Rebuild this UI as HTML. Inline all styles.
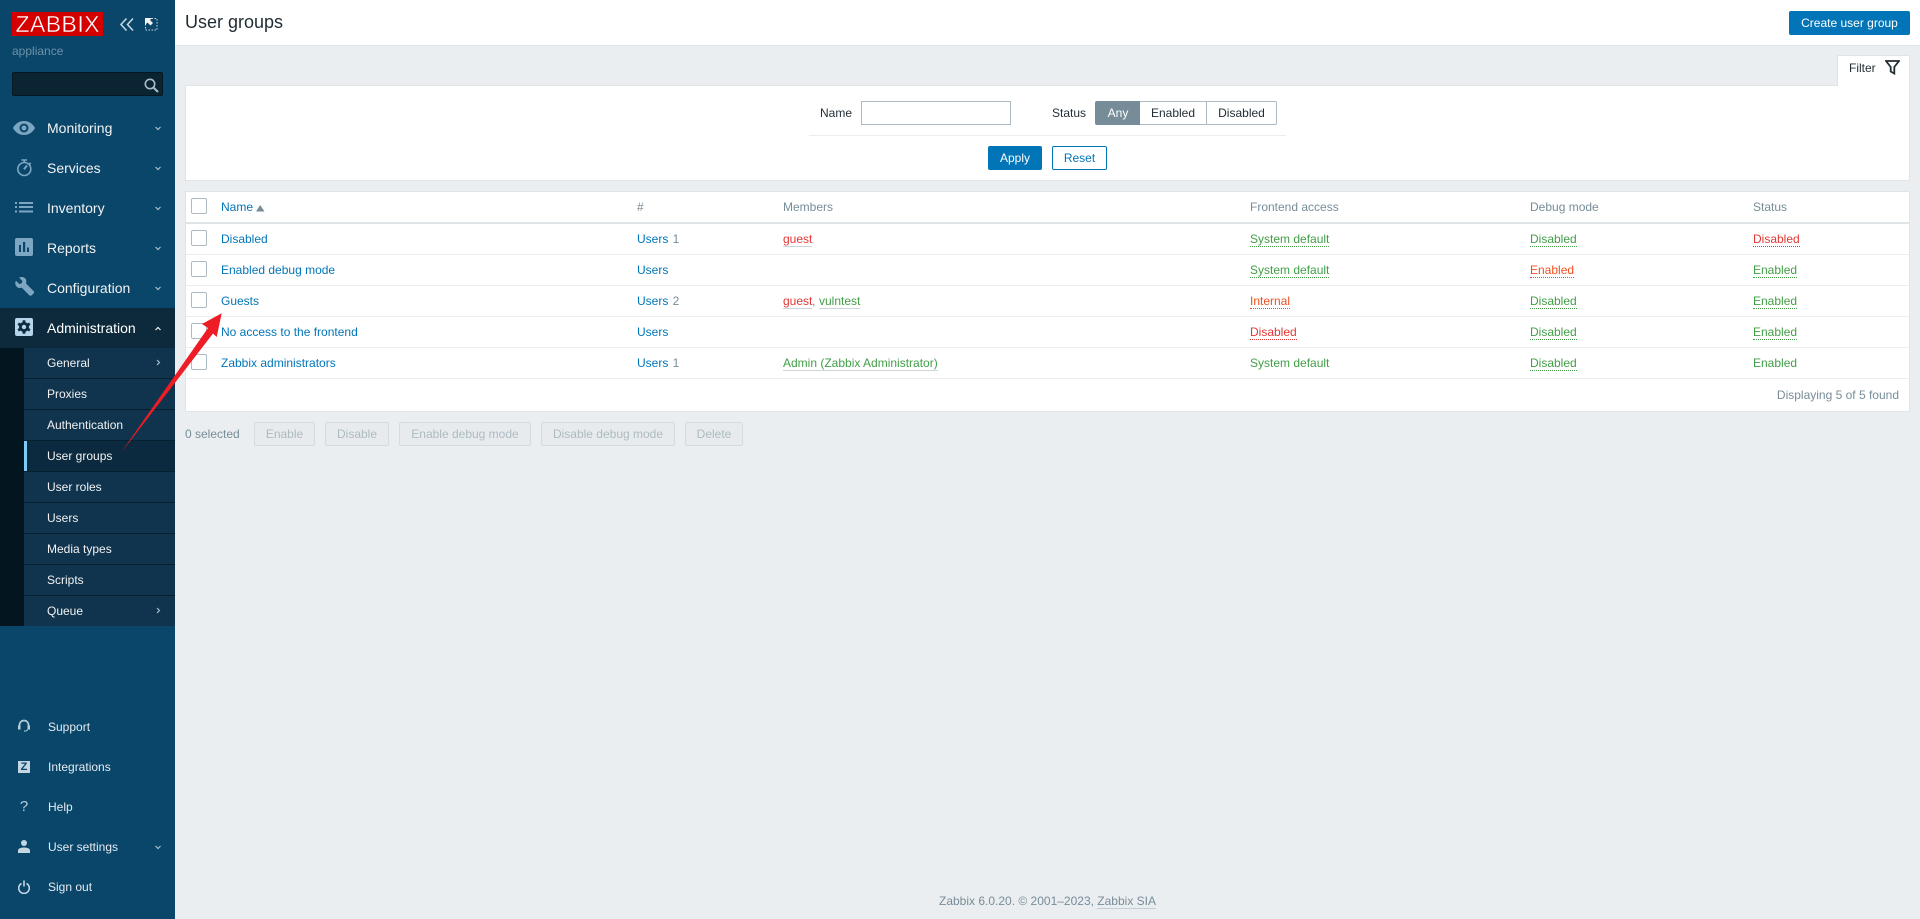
<!DOCTYPE html>
<html lang="en"><head><meta charset="utf-8"><title>User groups</title>
<style>
*{box-sizing:border-box}
html,body{margin:0;padding:0;width:1920px;height:919px;overflow:hidden;background:#ebeef0;font:12px/14px "Liberation Sans",Arial,sans-serif;color:#1f2c33}
.a{position:absolute}
.t{position:absolute;white-space:nowrap;line-height:14px}
#side{position:absolute;left:0;top:0;width:175px;height:919px;background:#0a466a}
.m{position:absolute;left:47px;font-size:14px;line-height:16px;color:#f2f2f2;white-space:nowrap}
.s{position:absolute;left:47px;font-size:12px;line-height:14px;color:#f2f2f2;white-space:nowrap}
.b{position:absolute;left:48px;font-size:12px;line-height:14px;color:#e4ebf0;white-space:nowrap}
.sub{position:absolute;left:24px;width:151px;height:31px;background:#10344d;border-bottom:1px solid #06202f}
.l{color:#0275b8}.g{color:#429e47}.r{color:#e33734}.o{color:#f24f1d}.h{color:#768d99}
.u{border-bottom:1px solid #cdd5db}.d{border-bottom:1px dotted currentColor}
.cb{position:absolute;left:191px;width:16px;height:16px;background:#fff;border:1px solid #acbbc2;border-radius:2px}
.ln{position:absolute;left:186px;width:1723px;height:1px;background:#ebeef0}
.dis{position:absolute;top:422px;height:24px;border:1px solid #d5dce0;border-radius:2px;background:#e8ebed;color:#acbbc2;text-align:center;line-height:22px}
.seg{position:absolute;top:101px;height:24px;border:1px solid #acbbc2;background:#fff;text-align:center;line-height:22px;color:#1f2c33}
svg{display:block}
</style></head><body>

<div id="side">
  <svg class="a" style="left:12px;top:12px" width="91" height="24"><rect width="91" height="24" fill="#d40000"/><text x="3.500" y="20" font-family="Liberation Sans" font-size="23" fill="#fff" stroke="#d40000" stroke-width=".4" textLength="84" lengthAdjust="spacing">ZABBIX</text></svg>
  <svg class="a" style="left:118px;top:16px" width="42" height="16" fill="none" stroke="#c9d8e2" stroke-width="1.500"><path d="M8.500 2.500 3 8.500l5.500 6M15 2.500 9.500 8.500l5.500 6"/><path d="M27.500 2.500h11.500v11.500H27.500z" stroke-dasharray="1.500 1.500" stroke-width="1"/><path d="M27 2h7l-2 2 3 3-2.500 2.500-3-3L27 9z" fill="#f2f2f2" stroke="none"/></svg>
  <div class="t" style="left:12px;top:44px;color:#6d91a8">appliance</div>
  <div class="a" style="left:12px;top:72px;width:151px;height:24px;background:#0b2433;border:1px solid #051722;border-radius:2px"></div>
  <svg class="a" style="left:144px;top:78px" width="15" height="15" fill="none" stroke="#a8bdca" stroke-width="1.600"><circle cx="6" cy="6" r="4.700"/><path d="m9.500 9.500 4.500 4.500" stroke-width="2"/></svg>

  <svg class="a" style="left:13px;top:121px" width="22" height="14"><path fill="#7ca6c2" fill-rule="evenodd" d="M11 0c5 0 9 3 11 7-2 4-6 7-11 7S2 11 0 7c2-4 6-7 11-7Zm0 2.500a4.500 4.500 0 1 0 0 9 4.500 4.500 0 0 0 0-9Zm0 2a2.500 2.500 0 1 1 0 5 2.500 2.500 0 0 1 0-5Z"/></svg>
  <div class="m" style="top:120px">Monitoring</div>
  <svg class="a" style="left:16px;top:159px" width="17" height="18" fill="none" stroke="#7ca6c2" stroke-width="1.600"><circle cx="8.300" cy="10" r="6.500"/><path d="M5.500 1h5.600M8.300 1v2.500M13.300 3.800l1.500 1.500"/><path d="m8 10.300 3-3.800" stroke-width="2"/></svg>
  <div class="m" style="top:160px">Services</div>
  <svg class="a" style="left:15px;top:201px" width="19" height="12" fill="#7ca6c2"><path d="M0 1h2v2H0zM4 1h14v2H4zM0 5h2v2H0zM4 5h14v2H4zM0 9.500h2v2H0zM4 9.500h14v2H4z"/></svg>
  <div class="m" style="top:200px">Inventory</div>
  <svg class="a" style="left:15px;top:238px" width="18" height="18"><rect width="18" height="18" rx="2" fill="#7ca6c2"/><path fill="#0a466a" d="M4 7h2v7H4zM8 4h2.200v10H8zM12 9.500h2V14h-2z"/></svg>
  <div class="m" style="top:240px">Reports</div>
  <svg class="a" style="left:15px;top:277px" width="19" height="19"><path fill="#7ca6c2" d="M1 3.800 4.300 7l2.400-.7.700-2.300L4.100.7C6.300-.4 9-.1 10.300 1.500c1.200 1.400 1.300 3.400.6 4.900l7.600 7.600c.7.700.7 1.800 0 2.500l-1.700 1.700c-.7.700-1.800.7-2.500 0L6.700 10.600c-1.700.7-3.700.4-5-.9C.2 8.200-.3 5.800 1 3.800Z"/></svg>
  <div class="m" style="top:280px">Configuration</div>

  <div class="a" style="left:0;top:308px;width:175px;height:40px;background:#0c2a3c"></div>
  <svg class="a" style="left:15px;top:318px" width="18" height="18"><rect width="18" height="18" rx="2" fill="#b7d5ea"/><g fill="#0c2a3c"><circle cx="9" cy="9" r="5"/><rect x="7.600" y="2.300" width="2.800" height="13.400"/><rect x="7.600" y="2.300" width="2.800" height="13.400" transform="rotate(60 9 9)"/><rect x="7.600" y="2.300" width="2.800" height="13.400" transform="rotate(120 9 9)"/></g><circle cx="9" cy="9" r="2.200" fill="#b7d5ea"/></svg>
  <div class="m" style="top:320px;color:#fff">Administration</div>

  <div class="a" style="left:0;top:348px;width:24px;height:278px;background:#03151f"></div>
  <div class="sub" style="top:348px"></div><div class="sub" style="top:379px"></div><div class="sub" style="top:410px"></div>
  <div class="sub" style="top:441px;background:#0c2a3f"></div><div class="a" style="left:24px;top:441px;width:3px;height:30px;background:#7ecbf7"></div>
  <div class="sub" style="top:472px"></div><div class="sub" style="top:503px"></div><div class="sub" style="top:534px"></div><div class="sub" style="top:565px"></div>
  <div class="sub" style="top:596px;height:30px;border:0"></div>
  <div class="s" style="top:356px">General</div>
  <div class="s" style="top:387px">Proxies</div>
  <div class="s" style="top:418px">Authentication</div>
  <div class="s" style="top:449px">User groups</div>
  <div class="s" style="top:480px">User roles</div>
  <div class="s" style="top:511px">Users</div>
  <div class="s" style="top:542px">Media types</div>
  <div class="s" style="top:573px">Scripts</div>
  <div class="s" style="top:604px">Queue</div>

  <svg class="a" style="left:0;top:0;pointer-events:none" width="175" height="919" fill="none" stroke="#a9c0cf" stroke-width="1.200">
    <path d="m155.500 127 2.500 2.500 2.500-2.500M155.500 167l2.500 2.500 2.500-2.500M155.500 207l2.500 2.500 2.500-2.500M155.500 247l2.500 2.500 2.500-2.500M155.500 287l2.500 2.500 2.500-2.500M155.500 846l2.500 2.500 2.500-2.500"/>
    <path stroke="#f2f2f2" d="m155.500 330 2.500-2.500 2.500 2.500"/>
    <path d="m157 360 2.500 2.500L157 365M157 608l2.500 2.500L157 613"/>
  </svg>

  <svg class="a" style="left:18px;top:719px" width="12" height="13" fill="none" stroke="#b9cedc" stroke-width="1.700"><path d="M1.500 8V6a4.500 4.500 0 0 1 9 0v2"/><path d="M0 6.500h2.500v4H0zM9.500 6.500H12v4H9.500z" fill="#b9cedc" stroke="none"/><path d="M10 10.500 8 12H6" stroke-width="1"/></svg>
  <div class="b" style="top:720px">Support</div>
  <div class="a" style="left:18px;top:761px;width:12px;height:12px;background:#c4d6e2;color:#0a466a;font:bold 11px/12px 'Liberation Sans',sans-serif;text-align:center">Z</div>
  <div class="b" style="top:760px">Integrations</div>
  <div class="a" style="left:18px;top:798px;width:12px;text-align:center;color:#b9cedc;font:15px/18px 'Liberation Sans',sans-serif">?</div>
  <div class="b" style="top:800px">Help</div>
  <svg class="a" style="left:18px;top:840px" width="12" height="13" fill="#c4d6e2"><circle cx="6" cy="3" r="3"/><path d="M0 13v-2.500C0 8.500 3 7.500 6 7.500s6 1 6 3V13z"/></svg>
  <div class="b" style="top:840px">User settings</div>
  <svg class="a" style="left:18px;top:880px" width="12" height="14" fill="none" stroke="#c4d6e2" stroke-width="1.600"><path d="M3.500 3.500a5.300 5.300 0 1 0 5 0M6 .5v6"/></svg>
  <div class="b" style="top:880px">Sign out</div>
</div>

<!-- header -->
<div class="a" style="left:175px;top:0;width:1745px;height:46px;background:#fff;border-bottom:1px solid #dfe4e7"></div>
<div class="a" style="left:185px;top:12px;font-size:18px;line-height:21px;color:#1f2c33">User groups</div>
<div class="a" style="left:1789px;top:11px;width:121px;height:24px;background:#0275b8;border-radius:2px;color:#fff;text-align:center;line-height:24px">Create user group</div>

<!-- filter -->
<div class="a" style="left:185px;top:85px;width:1725px;height:96px;background:#fff;border:1px solid #dfe4e7"></div>
<div class="a" style="left:1837px;top:55px;width:73px;height:31px;background:#fff;border:1px solid #dfe4e7;border-bottom:0"></div>
<div class="t" style="left:1849px;top:61px">Filter</div>
<svg class="a" style="left:1885px;top:60px" width="15" height="15" fill="none" stroke="#1f2c33" stroke-width="1.800"><path d="M1 1h13L9.300 7v6.500L5.700 11.500V7z"/></svg>
<div class="t" style="left:820px;top:106px">Name</div>
<div class="a" style="left:861px;top:101px;width:150px;height:24px;background:#fff;border:1px solid #acbbc2"></div>
<div class="t" style="left:1052px;top:106px">Status</div>
<div class="seg" style="left:1095px;width:46px;background:#768d99;border-color:#768d99;color:#fff;border-radius:2px 0 0 2px">Any</div>
<div class="seg" style="left:1140px;width:67px;border-left:0">Enabled</div>
<div class="seg" style="left:1206px;width:71px;border-radius:0 2px 2px 0">Disabled</div>
<div class="a" style="left:809px;top:135px;width:477px;height:1px;background:#ebeef0"></div>
<div class="a" style="left:988px;top:146px;width:54px;height:24px;background:#0275b8;border-radius:2px;color:#fff;text-align:center;line-height:24px">Apply</div>
<div class="a" style="left:1052px;top:146px;width:55px;height:24px;background:#fff;border:1px solid #0275b8;border-radius:2px;color:#0275b8;text-align:center;line-height:22px">Reset</div>

<!-- table -->
<div class="a" style="left:185px;top:191px;width:1725px;height:221px;background:#fff;border:1px solid #dfe4e7"></div>
<div class="a" style="left:186px;top:222px;width:1723px;height:2px;background:#dfe4e7"></div>
<div class="ln" style="top:254px"></div><div class="ln" style="top:285px"></div><div class="ln" style="top:316px"></div><div class="ln" style="top:347px"></div><div class="ln" style="top:378px"></div>

<div class="cb" style="top:198px"></div><div class="cb" style="top:230px"></div><div class="cb" style="top:261px"></div><div class="cb" style="top:292px"></div><div class="cb" style="top:323px"></div><div class="cb" style="top:354px"></div>

<div class="t l" style="left:221px;top:200px">Name</div>
<svg class="a" style="left:256px;top:205px" width="9" height="7"><path d="M0 6.500 4.200 0l4.300 6.500z" fill="#768d99"/></svg>
<div class="t h" style="left:637px;top:200px">#</div>
<div class="t h" style="left:783px;top:200px">Members</div>
<div class="t h" style="left:1250px;top:200px">Frontend access</div>
<div class="t h" style="left:1530px;top:200px">Debug mode</div>
<div class="t h" style="left:1753px;top:200px">Status</div>

<div class="t l" style="left:221px;top:232px">Disabled</div>
<div class="t l" style="left:637px;top:232px">Users <span class="h" style="margin-left:1px">1</span></div>
<div class="t r u" style="left:783px;top:232px">guest</div>
<div class="t g d" style="left:1250px;top:232px">System default</div>
<div class="t g d" style="left:1530px;top:232px">Disabled</div>
<div class="t r d" style="left:1753px;top:232px">Disabled</div>

<div class="t l" style="left:221px;top:263px">Enabled debug mode</div>
<div class="t l" style="left:637px;top:263px">Users</div>
<div class="t g d" style="left:1250px;top:263px">System default</div>
<div class="t o d" style="left:1530px;top:263px">Enabled</div>
<div class="t g d" style="left:1753px;top:263px">Enabled</div>

<div class="t l" style="left:221px;top:294px">Guests</div>
<div class="t l" style="left:637px;top:294px">Users <span class="h" style="margin-left:1px">2</span></div>
<div class="t r u" style="left:783px;top:294px">guest</div><div class="t h" style="left:812px;top:294px">,</div>
<div class="t g u" style="left:819px;top:294px">vulntest</div>
<div class="t o d" style="left:1250px;top:294px">Internal</div>
<div class="t g d" style="left:1530px;top:294px">Disabled</div>
<div class="t g d" style="left:1753px;top:294px">Enabled</div>

<div class="t l" style="left:221px;top:325px">No access to the frontend</div>
<div class="t l" style="left:637px;top:325px">Users</div>
<div class="t r d" style="left:1250px;top:325px">Disabled</div>
<div class="t g d" style="left:1530px;top:325px">Disabled</div>
<div class="t g d" style="left:1753px;top:325px">Enabled</div>

<div class="t l" style="left:221px;top:356px">Zabbix administrators</div>
<div class="t l" style="left:637px;top:356px">Users <span class="h" style="margin-left:1px">1</span></div>
<div class="t g u" style="left:783px;top:356px">Admin (Zabbix Administrator)</div>
<div class="t g" style="left:1250px;top:356px">System default</div>
<div class="t g d" style="left:1530px;top:356px">Disabled</div>
<div class="t g" style="left:1753px;top:356px">Enabled</div>

<div class="t h" style="right:21px;top:388px">Displaying 5 of 5 found</div>

<div class="t h" style="left:185px;top:427px">0 selected</div>
<div class="dis" style="left:254px;width:61px">Enable</div>
<div class="dis" style="left:325px;width:64px">Disable</div>
<div class="dis" style="left:399px;width:132px">Enable debug mode</div>
<div class="dis" style="left:541px;width:134px">Disable debug mode</div>
<div class="dis" style="left:685px;width:58px">Delete</div>

<div class="t h" style="left:939px;top:894px">Zabbix 6.0.20. © 2001–2023, <span style="border-bottom:1px solid #c5ced4">Zabbix SIA</span></div>

<svg class="a" style="left:0;top:0;pointer-events:none" width="1920" height="919"><polygon fill="#ee1c25" points="120.500,453.500 208,328 202,324 221.700,313.300 216.700,337 213,333.500"/></svg>
</body></html>
